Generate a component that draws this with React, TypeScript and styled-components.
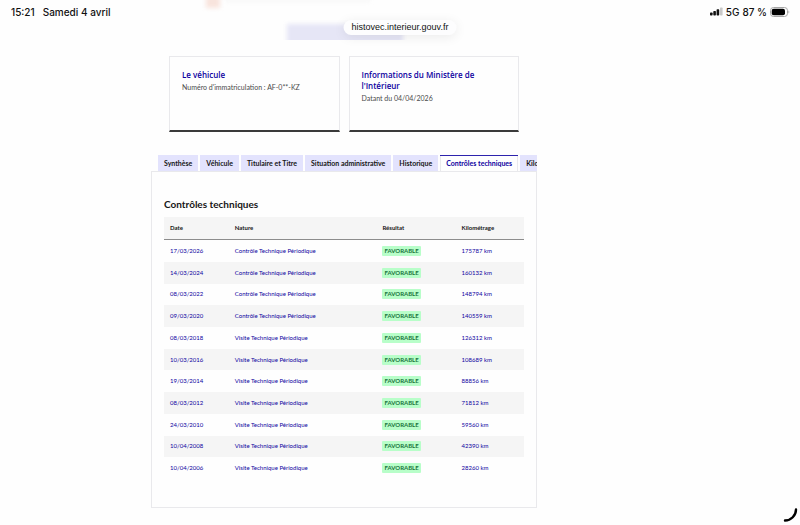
import React from "react";
import styled, { createGlobalStyle } from "styled-components";

const GlobalStyle = createGlobalStyle`
  *, *::before, *::after { box-sizing: border-box; }
  body {
    margin: 0;
    background: #fefefe;
    color: #161616;
    font-family: Lato, "Open Sans", sans-serif;
    overflow: hidden;
  }
`;

const blue = "#0c00a0";
const line = "#e9e9ec";

const TopArea = styled.header`
  position: relative;
  height: 40px;
  font-family: Inter, "Liberation Sans", sans-serif;
`;

const Underlay = styled.div`
  position: absolute;
  inset: 0;
  overflow: hidden;
`;

const Haze = styled.div<{ $x: number; $y: number; $w: number; $h: number; $color: string; $blur: number }>`
  position: absolute;
  left: ${(p) => p.$x}px;
  top: ${(p) => p.$y}px;
  width: ${(p) => p.$w}px;
  height: ${(p) => p.$h}px;
  background: ${(p) => p.$color};
  filter: blur(${(p) => p.$blur}px);
`;

const StatusBar = styled.div`
  position: relative;
  display: flex;
  justify-content: space-between;
  align-items: center;
  height: 23px;
  padding: 0 10px 0 11px;
  font-size: 10px;
  line-height: 14px;
  font-weight: 500;
  color: #111;
`;

const StatusGroup = styled.div<{ $gap: number }>`
  display: flex;
  align-items: center;
  gap: ${(p) => p.$gap}px;
  white-space: nowrap;
`;

const Address = styled.div`
  position: absolute;
  top: 20px;
  left: 50%;
  transform: translateX(-50%);
  padding: 0 8px;
  border-radius: 8px;
  background: #fdfdfe;
  box-shadow: 0 2px 12px rgba(0, 0, 0, 0.08);
  font-family: "Liberation Sans", sans-serif;
  font-size: 9px;
  line-height: 15px;
  color: #111;
  white-space: nowrap;
`;

const Page = styled.main`
  padding: 16px 263px 16px 151px;
`;

const Cards = styled.section`
  display: grid;
  grid-template-columns: 1fr 1fr;
  gap: 9px;
  padding: 0 18px;
`;

const Card = styled.article`
  min-height: 76px;
  padding: 12px;
  border: 1px solid ${line};
  border-bottom: 2px solid #3a3a3a;
`;

const CardTitle = styled.h2`
  margin: 0 0 2px;
  font-family: "Open Sans", "Noto Sans", sans-serif;
  font-size: 8px;
  line-height: 11px;
  font-weight: 600;
  color: ${blue};
`;

const CardText = styled.p`
  margin: 0;
  font-size: 7px;
  line-height: 11px;
  color: #4a4a4a;
`;

const Tabs = styled.div`
  display: flex;
  gap: 2px;
  margin-top: 23px;
  padding-left: 7px;
  overflow: hidden;
`;

const Tab = styled.button<{ $active: boolean }>`
  display: flex;
  flex: none;
  height: 16px;
  padding: 1px 6px 0;
  border: 0;
  background: ${(p) => (p.$active ? "#fefefe" : "#e3e3fd")};
  box-shadow: ${(p) => (p.$active ? `inset 0 1px #2d23ad, inset 1px 0 ${line}, inset -1px 0 ${line}` : "none")};
  color: ${(p) => (p.$active ? blue : "#161616")};
  font-family: inherit;
  font-size: 7px;
  line-height: 14px;
  font-weight: 700;
  white-space: nowrap;
`;

const Panel = styled.section`
  padding: 25px 12px 28px;
  border: 1px solid ${line};
`;

const Heading = styled.h3`
  margin: 0 0 5px;
  font-size: 10px;
  line-height: 15px;
  font-weight: 700;
`;

const Table = styled.table`
  width: 100%;
  height: 262px;
  border-collapse: collapse;
  table-layout: fixed;
  font-size: 6px;
  line-height: 10px;
`;

const Column = styled.col<{ $share: number }>`
  width: ${(p) => p.$share}%;
`;

const HeadRow = styled.tr`
  background: #f5f5f5;
  border-bottom: 1px solid #8c8c8c;
`;

const HeadCell = styled.th`
  height: 22px;
  padding: 0 6px;
  text-align: left;
  font-weight: 700;
`;

const Row = styled.tr`
  color: ${blue};
  &:nth-child(even) { background: #f5f5f5; }
`;

const Cell = styled.td`
  padding: 0 6px;
  vertical-align: middle;
`;

const Badge = styled.span`
  display: block;
  width: fit-content;
  padding: 1px 2px;
  border-radius: 1px;
  background: #b8fec9;
  color: #18753c;
  line-height: 8px;
  font-weight: 700;
`;

const Corner = styled.svg`
  position: fixed;
  right: 2px;
  bottom: 2px;
`;

const tabs = [
  "Synthèse",
  "Véhicule",
  "Titulaire et Titre",
  "Situation administrative",
  "Historique",
  "Contrôles techniques",
  "Kilométrage",
];

const controls: [string, string, string][] = [
  ["17/03/2026", "Contrôle Technique Périodique", "175787 km"],
  ["14/03/2024", "Contrôle Technique Périodique", "160132 km"],
  ["08/03/2022", "Contrôle Technique Périodique", "148794 km"],
  ["09/03/2020", "Contrôle Technique Périodique", "140559 km"],
  ["08/03/2018", "Visite Technique Périodique", "126312 km"],
  ["10/03/2016", "Visite Technique Périodique", "108689 km"],
  ["19/03/2014", "Visite Technique Périodique", "88856 km"],
  ["08/03/2012", "Visite Technique Périodique", "71812 km"],
  ["24/03/2010", "Visite Technique Périodique", "59560 km"],
  ["10/04/2008", "Visite Technique Périodique", "42390 km"],
  ["10/04/2006", "Visite Technique Périodique", "28260 km"],
];

function Signal() {
  return (
    <svg width="13" height="9" viewBox="0 0 13 9" aria-hidden="true">
      <rect x="0" y="5.5" width="2.6" height="3" rx="0.7" fill="#111" />
      <rect x="3.3" y="4" width="2.6" height="4.5" rx="0.7" fill="#111" />
      <rect x="6.6" y="2.3" width="2.6" height="6.2" rx="0.7" fill="#111" />
      <rect x="10" y="0.5" width="2.6" height="8" rx="0.7" fill="#c9c9c9" />
    </svg>
  );
}

function Battery() {
  return (
    <svg width="20" height="10" viewBox="0 0 20 10" aria-hidden="true">
      <rect x="0.5" y="0.5" width="17" height="9" rx="3" fill="none" stroke="#a6a6a6" />
      <rect x="1.7" y="1.7" width="13.3" height="6.6" rx="2" fill="#000" />
      <path d="M18.5 3.5c1 .4 1 2.6 0 3z" fill="#a6a6a6" />
    </svg>
  );
}

export default function App() {
  return (
    <>
      <GlobalStyle />
      <TopArea>
        <Underlay>
          <Haze $x={206} $y={-4} $w={14} $h={12} $color="#f8e4dd" $blur={2} />
          <Haze $x={226} $y={-3} $w={144} $h={5} $color="#f7f7f7" $blur={2} />
          <Haze $x={287} $y={24} $w={116} $h={24} $color="#e6e6f6" $blur={2} />
        </Underlay>
        <StatusBar>
          <StatusGroup $gap={8}>
            <span>15:21</span>
            <span>Samedi 4 avril</span>
          </StatusGroup>
          <StatusGroup $gap={3}>
            <Signal />
            <span>5G</span>
            <span>87 %</span>
            <Battery />
          </StatusGroup>
        </StatusBar>
        <Address>histovec.interieur.gouv.fr</Address>
      </TopArea>
      <Page>
        <Cards>
          <Card>
            <CardTitle>Le véhicule</CardTitle>
            <CardText>Numéro d'immatriculation : AF-0**-KZ</CardText>
          </Card>
          <Card>
            <CardTitle>Informations du Ministère de l'Intérieur</CardTitle>
            <CardText>Datant du 04/04/2026</CardText>
          </Card>
        </Cards>
        <Tabs role="tablist">
          {tabs.map((label) => {
            const active = label === "Contrôles techniques";
            return (
              <Tab key={label} type="button" role="tab" aria-selected={active} $active={active}>
                {label}
              </Tab>
            );
          })}
        </Tabs>
        <Panel role="tabpanel" aria-label="Contrôles techniques">
          <Heading id="controls-title">Contrôles techniques</Heading>
          <Table aria-labelledby="controls-title">
            <colgroup>
              <Column $share={18} />
              <Column $share={41} />
              <Column $share={22} />
              <Column $share={19} />
            </colgroup>
            <thead>
              <HeadRow>
                <HeadCell scope="col">Date</HeadCell>
                <HeadCell scope="col">Nature</HeadCell>
                <HeadCell scope="col">Résultat</HeadCell>
                <HeadCell scope="col">Kilométrage</HeadCell>
              </HeadRow>
            </thead>
            <tbody>
              {controls.map(([date, nature, mileage]) => (
                <Row key={date}>
                  <Cell>{date}</Cell>
                  <Cell>{nature}</Cell>
                  <Cell>
                    <Badge>FAVORABLE</Badge>
                  </Cell>
                  <Cell>{mileage}</Cell>
                </Row>
              ))}
            </tbody>
          </Table>
        </Panel>
      </Page>
      <Corner width="16" height="16" viewBox="0 0 16 16" aria-hidden="true">
        <path d="M14 2.5c0 6-5 11-11 11" fill="none" stroke="#000" strokeWidth="2.4" strokeLinecap="round" />
      </Corner>
    </>
  );
}
